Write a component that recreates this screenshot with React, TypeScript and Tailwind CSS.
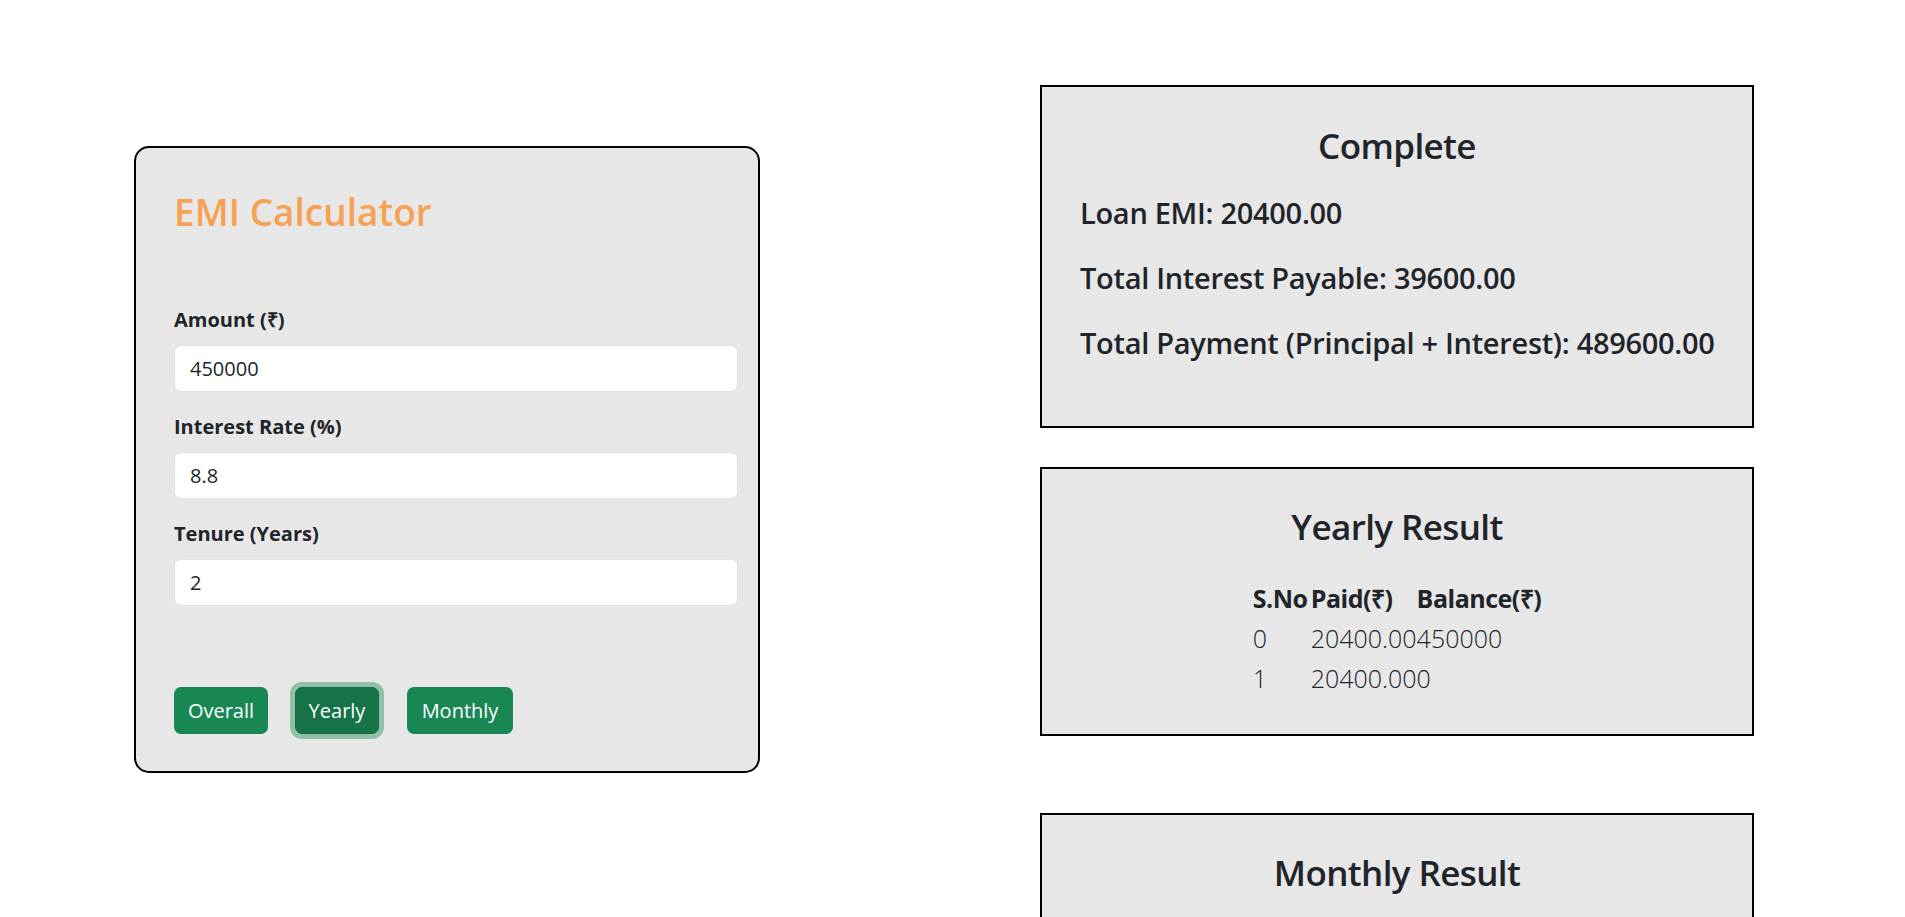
import { useState } from "react";

const monthlyRows = Array.from({ length: 24 }, (_, i) => ({
  sno: i,
  paid: "20400.00",
  balance: String(450000 - 18750 * i),
}));

const yearlyRows = [
  { sno: 0, paid: "20400.00", balance: "450000" },
  { sno: 1, paid: "20400.00", balance: "0" },
];

function ResultTable({ rows }: { rows: { sno: number; paid: string; balance: string }[] }) {
  return (
    <table className="mx-auto mt-[30px] table-fixed border-collapse text-[25px] leading-[40px] font-light text-[#212529]">
      <thead>
        <tr>
          <th className="w-[58px] p-0 text-left font-bold tracking-[-0.5px]">S.No</th>
          <th className="w-[102px] p-0 text-left font-bold tracking-[-0.5px]">Paid(₹)</th>
          <th className="w-[122px] p-0 text-left font-bold tracking-[-0.5px]">Balance(₹)</th>
        </tr>
      </thead>
      <tbody>
        {rows.map((r) => (
          <tr key={r.sno}>
            <td className="p-0 whitespace-nowrap">{r.sno}</td>
            <td className="p-0 whitespace-nowrap">{r.paid}</td>
            <td className="p-0 whitespace-nowrap">{r.balance}</td>
          </tr>
        ))}
      </tbody>
    </table>
  );
}

export default function App() {
  const [amount, setAmount] = useState("450000");
  const [rate, setRate] = useState("8.8");
  const [tenure, setTenure] = useState("2");

  const inputCls =
    "block w-full h-[47px] rounded-[7px] border border-[#dee2e6] bg-white px-[15px] text-[20px] text-[#212529] outline-none";
  const labelCls = "block text-[20px] leading-[30px] font-bold mb-[10px]";
  const boxTitle = "text-center text-[35px] leading-[42px] font-semibold tracking-[-0.6px]";
  const lineCls = "text-[29px] leading-[36px] font-semibold tracking-[-0.3px] whitespace-nowrap";

  return (
    <div className="min-h-screen bg-white pr-[17px] text-[#212529] font-['Segoe_UI','Open_Sans',sans-serif]">
      <div className="mx-auto flex w-[1650px] pt-[85px] pb-[40px]">
        {/* form */}
        <div className="w-[825px] px-[15px]">
          <div className="mt-[61px] w-[626px] rounded-[15px] border-2 border-black bg-[#e7e7e7] pt-[42px] pb-[37px] pl-[38px] pr-[20px]">
            <h3 className="text-[37px] leading-[44px] font-semibold text-[#f8a152] mb-[71px]">EMI Calculator</h3>

            <label className={labelCls}>Amount (₹)</label>
            <input className={inputCls} value={amount} onChange={(e) => setAmount(e.target.value)} />

            <label className={labelCls + " mt-[20px]"}>Interest Rate (%)</label>
            <input className={inputCls} value={rate} onChange={(e) => setRate(e.target.value)} />

            <label className={labelCls + " mt-[20px]"}>Tenure (Years)</label>
            <input className={inputCls} value={tenure} onChange={(e) => setTenure(e.target.value)} />

            <div className="mt-[81px] flex">
              <button className="h-[47px] w-[94px] rounded-[7px] bg-[#198754] text-[20px] text-white">Overall</button>
              <button className="ml-[27px] h-[47px] w-[84px] rounded-[7px] border border-[#146c43] bg-[#157347] text-[20px] text-white shadow-[0_0_0_5px_rgba(60,153,110,0.5)]">
                Yearly
              </button>
              <button className="ml-[28px] h-[47px] w-[106px] rounded-[7px] bg-[#198754] text-[20px] text-white">Monthly</button>
            </div>
          </div>
        </div>

        {/* results */}
        <div className="w-[825px] px-[15px]">
          <div className="ml-auto w-[714px] border-2 border-black bg-[#e7e7e7] pt-[38px] pb-[65px] px-[38px]">
            <h3 className={boxTitle}>Complete</h3>
            <h4 className={lineCls + " mt-[28px]"}>Loan EMI: 20400.00</h4>
            <h4 className={lineCls + " mt-[29px]"}>Total Interest Payable: 39600.00</h4>
            <h4 className={lineCls + " mt-[29px]"}>Total Payment (Principal + Interest): 489600.00</h4>
          </div>

          <div className="ml-auto mt-[39px] w-[714px] border-2 border-black bg-[#e7e7e7] pt-[37px] pb-[36px] px-[38px]">
            <h3 className={boxTitle}>Yearly Result</h3>
            <ResultTable rows={yearlyRows} />
          </div>

          <div className="ml-auto mt-[77px] w-[714px] border-2 border-black bg-[#e7e7e7] pt-[37px] pb-[36px] px-[38px]">
            <h3 className={boxTitle}>Monthly Result</h3>
            <ResultTable rows={monthlyRows} />
          </div>
        </div>
      </div>
    </div>
  );
}
